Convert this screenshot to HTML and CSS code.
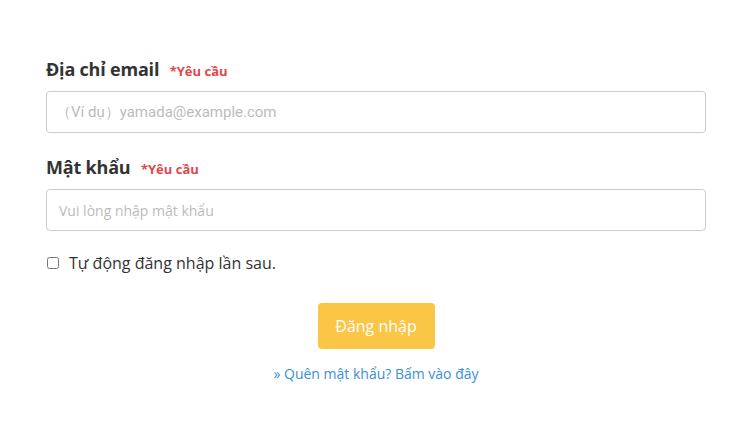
FILE: index.html
```html
<!DOCTYPE html>
<html lang="vi">
<head>
<meta charset="utf-8">
<link rel="stylesheet" href="styles.css">
</head>
<body>
<form class="login">
  <div class="field">
    <label class="label">Địa chỉ email <span class="req">*Yêu cầu</span></label>
    <input class="input input-email" type="text" placeholder="（Ví dụ）yamada@example.com">
  </div>
  <div class="field">
    <label class="label">Mật khẩu <span class="req">*Yêu cầu</span></label>
    <input class="input" type="password" placeholder="Vui lòng nhập mật khẩu">
  </div>
  <label class="remember"><input type="checkbox" class="check"> Tự động đăng nhập lần sau.</label>
  <div class="actions">
    <button type="button" class="btn">Đăng nhập</button>
    <a class="forgot" href="#">» Quên mật khẩu? Bấm vào đây</a>
  </div>
</form>
</body>
</html>
```

FILE: styles.css
```css
html, body {
  margin: 0;
  background: #fff;
}
body {
  font-family: "Open Sans", "Noto Sans", sans-serif;
  color: #333;
}
.login {
  padding: 57px 45px 0 46px;
  display: flex;
  flex-direction: column;
}
.field {
  display: flex;
  flex-direction: column;
  gap: 10px;
  margin-bottom: 22px;
}
.label {
  height: 24px;
  line-height: 24px;
  font-size: 18px;
  font-weight: 700;
  color: #333;
  letter-spacing: -0.2px;
}
.req {
  font-size: 13px;
  color: #e0474c;
  margin-left: 6px;
  letter-spacing: 0;
}
.input {
  box-sizing: border-box;
  height: 42px;
  width: 100%;
  border: 1px solid #ccc;
  border-radius: 4px;
  padding: 0 12px;
  font-family: "Open Sans", sans-serif;
  font-size: 14px;
  color: #333;
  outline: none;
}
.input::placeholder {
  color: #bbb;
}
.input-email {
  font-family: Roboto, sans-serif;
  font-size: 15px;
  padding-left: 9px;
}
.remember {
  display: flex;
  align-items: center;
  height: 20px;
  font-size: 16px;
  color: #333;
}
.check {
  margin: 0 10px 0 1px;
  width: 12px;
  height: 12px;
}
.actions {
  display: flex;
  flex-direction: column;
  align-items: center;
  margin-top: 30px;
}
.btn {
  width: 117px;
  height: 46px;
  border: none;
  border-radius: 4px;
  background: #fbc546;
  color: #fff;
  font-family: "Open Sans", sans-serif;
  font-size: 16px;
  cursor: pointer;
}
.forgot {
  margin-top: 15px;
  line-height: 20px;
  font-size: 14px;
  color: #3a8fd6;
  text-decoration: none;
}
```
